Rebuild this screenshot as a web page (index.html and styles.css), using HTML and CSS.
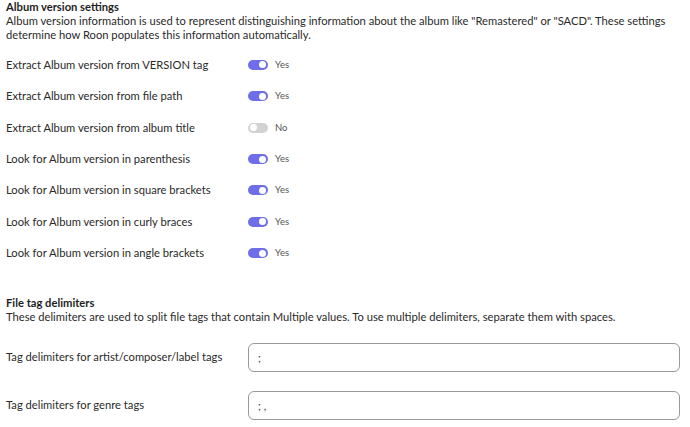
FILE: index.html
```html
<!DOCTYPE html>
<html lang="en">
<head>
<meta charset="UTF-8">
<title>Import Settings</title>
<link rel="stylesheet" href="styles.css">
</head>
<body>

<div class="section">
    <h2>Album version settings</h2>
    <p>Album version information is used to represent distinguishing information about the album like "Remastered" or "SACD". These settings determine how Roon populates this information automatically.</p>
    <div class="rows">
        <div class="row">
            <span class="label">Extract Album version from VERSION tag</span>
            <span class="toggle on"><i></i></span><span class="state">Yes</span>
        </div>
        <div class="row">
            <span class="label">Extract Album version from file path</span>
            <span class="toggle on"><i></i></span><span class="state">Yes</span>
        </div>
        <div class="row">
            <span class="label">Extract Album version from album title</span>
            <span class="toggle"><i></i></span><span class="state">No</span>
        </div>
        <div class="row">
            <span class="label">Look for Album version in parenthesis</span>
            <span class="toggle on"><i></i></span><span class="state">Yes</span>
        </div>
        <div class="row">
            <span class="label">Look for Album version in square brackets</span>
            <span class="toggle on"><i></i></span><span class="state">Yes</span>
        </div>
        <div class="row">
            <span class="label">Look for Album version in curly braces</span>
            <span class="toggle on"><i></i></span><span class="state">Yes</span>
        </div>
        <div class="row">
            <span class="label">Look for Album version in angle brackets</span>
            <span class="toggle on"><i></i></span><span class="state">Yes</span>
        </div>
    </div>
</div>

<div class="section second">
    <h2>File tag delimiters</h2>
    <p>These delimiters are used to split file tags that contain Multiple values. To use multiple delimiters, separate them with spaces.</p>
    <div class="fields">
        <div class="field">
            <span class="label">Tag delimiters for artist/composer/label tags</span>
            <input type="text" value=";">
        </div>
        <div class="field">
            <span class="label">Tag delimiters for genre tags</span>
            <input type="text" value="; ,">
        </div>
    </div>
</div>

</body>
</html>
```

FILE: styles.css
```css
body {
    margin: 0;
    padding: 0 10px 0 6px;
    font-family: "Lato", "Liberation Sans", sans-serif;
    font-size: 11.2px;
    line-height: 14px;
    color: #2a2a2a;
    background: #fff;
}
h2 {
    margin: 0;
    font-size: 11.2px;
    font-weight: bold;
    color: #1e1e1e;
}
p {
    margin: 0;
}
.rows {
    margin-top: 7px;
}
.row {
    height: 31.45px;
    display: flex;
    align-items: center;
}
.label {
    width: 242px;
}
.toggle {
    width: 20px;
    height: 10px;
    border-radius: 5px;
    background: #d2d2d4;
    display: flex;
    align-items: center;
    padding: 0 2px;
    box-sizing: border-box;
}
.toggle i {
    width: 7px;
    height: 7px;
    border-radius: 50%;
    background: #fff;
}
.toggle.on {
    background: #6d6ee8;
    justify-content: flex-end;
}
.state {
    margin-left: 7px;
    font-size: 9.5px;
    color: #555;
}
.second {
    margin-top: 27px;
}
.fields {
    margin-top: 9px;
}
.field {
    height: 48px;
    display: flex;
    align-items: center;
}
.field input {
    flex: 1;
    height: 29px;
    box-sizing: border-box;
    border: 1px solid #999;
    border-radius: 6px;
    padding: 0 9px;
    font-family: "Lato", "Liberation Sans", sans-serif;
    font-size: 11px;
    color: #333;
    outline: none;
}
```
